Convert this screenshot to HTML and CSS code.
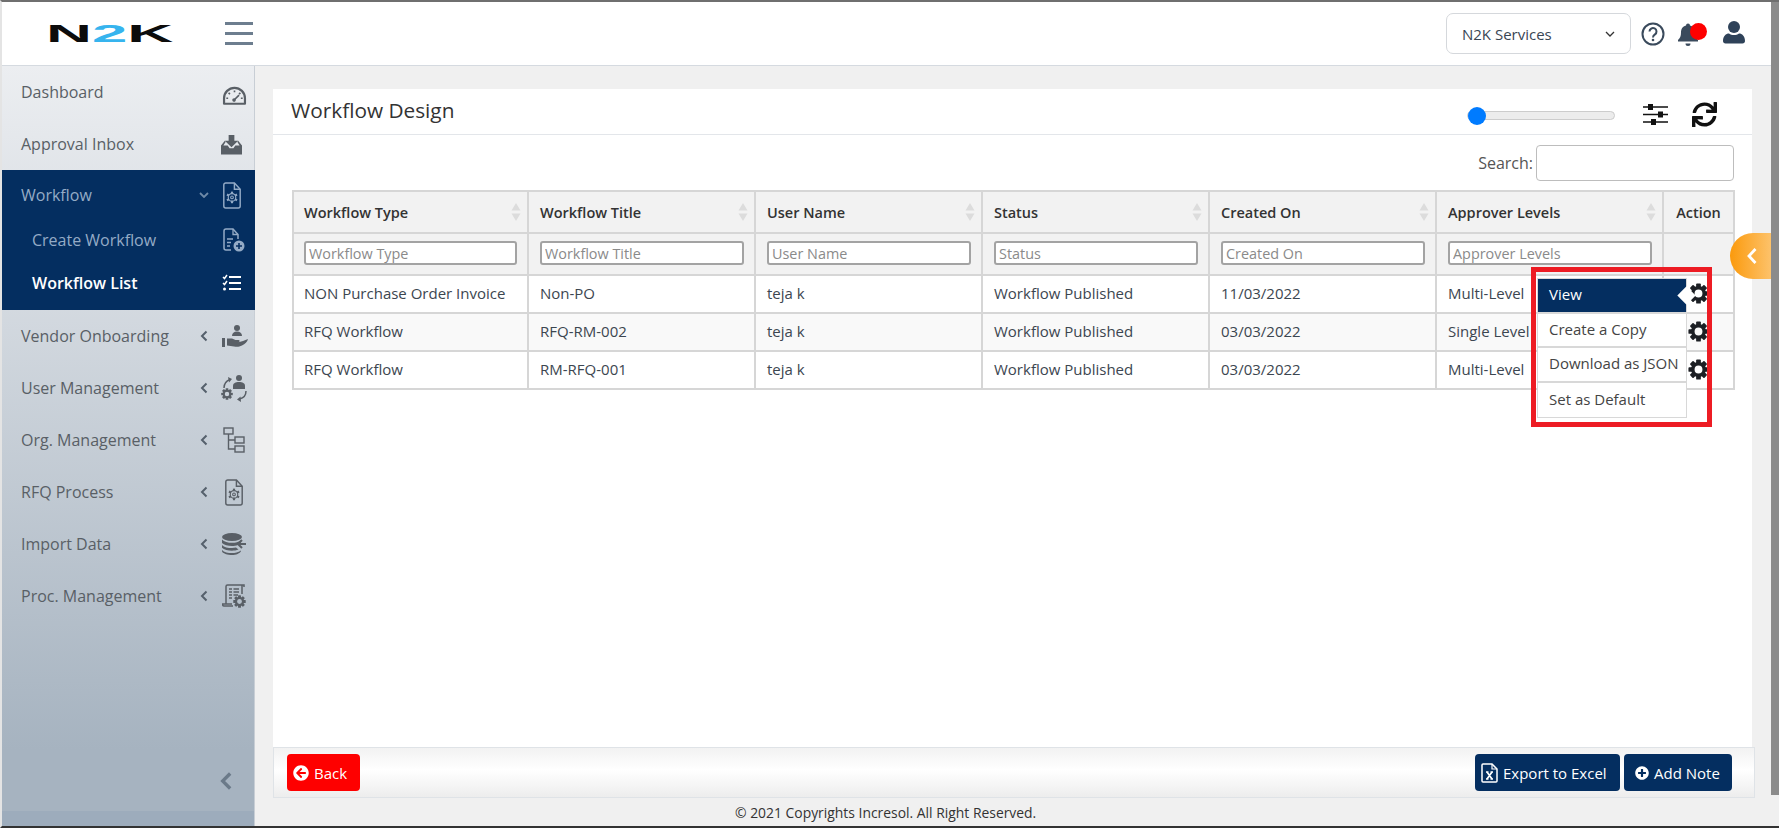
FILE: index.html
```html
<!DOCTYPE html>
<html lang="en">
<head>
  <meta charset="UTF-8">
  <title>Workflow Design</title>
  <link rel="stylesheet" href="styles.css">
</head>
<body>
<svg class="sprite" xmlns="http://www.w3.org/2000/svg">
  <symbol id="gear" viewBox="0 0 24 24">
    <g fill="currentColor">
      <rect x="9.300" y="0.500" width="5.400" height="6" rx="1"/>
      <rect x="9.300" y="0.500" width="5.400" height="6" rx="1" transform="rotate(45 12 12)"/>
      <rect x="9.300" y="0.500" width="5.400" height="6" rx="1" transform="rotate(90 12 12)"/>
      <rect x="9.300" y="0.500" width="5.400" height="6" rx="1" transform="rotate(135 12 12)"/>
      <rect x="9.300" y="0.500" width="5.400" height="6" rx="1" transform="rotate(180 12 12)"/>
      <rect x="9.300" y="0.500" width="5.400" height="6" rx="1" transform="rotate(225 12 12)"/>
      <rect x="9.300" y="0.500" width="5.400" height="6" rx="1" transform="rotate(270 12 12)"/>
      <rect x="9.300" y="0.500" width="5.400" height="6" rx="1" transform="rotate(315 12 12)"/>
    </g>
    <circle cx="12" cy="12" r="6.500" fill="none" stroke="currentColor" stroke-width="4"/>
  </symbol>
  <symbol id="sortArrows" viewBox="0 0 10 18">
    <path d="M5 0l4.500 7.500h-9zM5 18l4.500-7.500h-9z" fill="currentColor"/>
  </symbol>
  <symbol id="chevLeft" viewBox="0 0 10 12">
    <path d="M7.500 1.500L3 6l4.500 4.500" fill="none" stroke="currentColor" stroke-width="2"/>
  </symbol>
  <symbol id="docGear" viewBox="0 0 20 28">
    <path d="M1.500 3a2 2 0 0 1 2-2h9l6 6.500V25a2 2 0 0 1-2 2h-13a2 2 0 0 1-2-2z" fill="none" stroke="currentColor" stroke-width="1.500"/>
    <path d="M12.500 1v6.500h6" fill="none" stroke="currentColor" stroke-width="1.500"/>
    <g fill="currentColor">
      <rect x="8.900" y="10" width="2.200" height="2.400"/>
      <rect x="8.900" y="10" width="2.200" height="2.400" transform="rotate(60 10 16)"/>
      <rect x="8.900" y="10" width="2.200" height="2.400" transform="rotate(120 10 16)"/>
      <rect x="8.900" y="10" width="2.200" height="2.400" transform="rotate(180 10 16)"/>
      <rect x="8.900" y="10" width="2.200" height="2.400" transform="rotate(240 10 16)"/>
      <rect x="8.900" y="10" width="2.200" height="2.400" transform="rotate(300 10 16)"/>
    </g>
    <circle cx="10" cy="16" r="3.900" fill="none" stroke="currentColor" stroke-width="1.200"/>
    <circle cx="10" cy="16" r="1.400" fill="none" stroke="currentColor" stroke-width="1.100"/>
  </symbol>
</svg>

<div class="screen">
  <div class="page">
    <header class="topBar">
      <div class="brand">
        <span class="logo">N<b>2</b>K</span>
        <div class="burger"><i></i><i></i><i></i></div>
      </div>
      <div class="topTools">
        <div class="companySelect">
          <span>N2K Services</span>
          <svg width="10" height="6" viewBox="0 0 10 6"><path d="M1 1l4 4 4-4" fill="none" stroke="#333" stroke-width="1.300"/></svg>
        </div>
        <svg class="toolHelp" width="24" height="24" viewBox="0 0 24 24">
          <circle cx="12" cy="12" r="10.500" fill="none" stroke="#3a4a5c" stroke-width="2"/>
          <path d="M8.500 9.500a3.500 3.500 0 1 1 5.500 2.900c-1.300.9-2 1.500-2 3" fill="none" stroke="#3a4a5c" stroke-width="2"/>
          <circle cx="12" cy="18" r="1.300" fill="#3a4a5c"/>
        </svg>
        <div class="bell">
          <svg width="22" height="24" viewBox="0 0 22 24"><path d="M11 1.500a2 2 0 0 1 2 2c3.500.8 5 3.800 5 7 0 4 1 5.500 3 7.500v1.500H1V18c2-2 3-3.500 3-7.500 0-3.200 1.500-6.200 5-7a2 2 0 0 1 2-2zM8.500 21.500h5a2.500 2.500 0 0 1-5 0z" fill="#3a4a5c"/></svg>
          <span class="bellDot"></span>
        </div>
        <svg class="toolUser" width="22" height="24" viewBox="0 0 22 24"><circle cx="11" cy="7" r="6" fill="#2f4259"/><path d="M0 21c0-5 3-7.500 6-7.500 1.500 1 3 1.500 5 1.500s3.500-.5 5-1.500c3 0 6 2.500 6 7.500 0 1.500-1 2.500-2.500 2.500h-17C1 23.500 0 22.500 0 21z" fill="#2f4259"/></svg>
      </div>
    </header>

    <div class="shell">
      <nav class="sideNav">
        <a class="navItem">
          <span class="navLabel">Dashboard</span>
          <span class="navIcon navIconLow">
            <svg width="25" height="20" viewBox="0 0 26 22">
              <path d="M1.500 19.500v-6a11.500 11.500 0 0 1 23 0v6z" fill="none" stroke="currentColor" stroke-width="2.400" stroke-linejoin="round"/>
              <path d="M13 5v2M6.500 7.500L8 9M19.500 7.500L18 9M4 13.500h2M20 13.500h2M12 16l6-6" fill="none" stroke="currentColor" stroke-width="1.800"/>
              <circle cx="12.500" cy="15.500" r="2" fill="currentColor"/>
            </svg>
          </span>
        </a>
        <a class="navItem">
          <span class="navLabel">Approval Inbox</span>
          <span class="navIcon navIconLeft">
            <svg width="21" height="21" viewBox="0 0 22 22">
              <path d="M8 1h6v6h4l-7 7-7-7h4z" fill="currentColor"/>
              <path d="M4 7L0 12v9.500h22V12l-4-5-1 1 2.500 4H15l-2 3H9l-2-3H2.500L5 8z" fill="currentColor"/>
            </svg>
          </span>
        </a>
        <div class="navGroup">
          <a class="navItem navOpen">
            <span class="navLabel">Workflow</span>
            <svg class="navChevDown" width="10" height="6" viewBox="0 0 10 6"><path d="M1 1l4 4 4-4" fill="none" stroke="currentColor" stroke-width="1.800"/></svg>
            <span class="navIcon navIconLeft"><svg width="20" height="27"><use href="#docGear"/></svg></span>
          </a>
          <a class="navItem navSub">
            <span class="navLabel">Create Workflow</span>
            <span class="navIcon">
              <svg width="22" height="24" viewBox="0 0 22 24">
                <path d="M8 22H3a2 2 0 0 1-2-2V3a2 2 0 0 1 2-2h7l5 5.500V11" fill="none" stroke="currentColor" stroke-width="1.500"/>
                <path d="M10 1v5.500h5M4 11h6M4 14.500h4M4 18h3" fill="none" stroke="currentColor" stroke-width="1.300"/>
                <circle cx="16" cy="18" r="5.500" fill="currentColor"/>
                <path d="M16 15v6M13 18h6" stroke="#042e60" stroke-width="1.600"/>
              </svg>
            </span>
          </a>
          <a class="navItem navSub navCurrent">
            <span class="navLabel">Workflow List</span>
            <span class="navIcon navIconLeft">
              <svg width="19" height="17" viewBox="0 0 19 17">
                <path d="M1 3l1.500 1.500L5 1M1 9l1.500 1.500L5 7" fill="none" stroke="currentColor" stroke-width="1.500"/>
                <circle cx="2.500" cy="15" r="1.500" fill="currentColor"/>
                <path d="M7 3h12M7 9h12M7 15h12" stroke="currentColor" stroke-width="2"/>
              </svg>
            </span>
          </a>
        </div>
        <a class="navItem">
          <span class="navLabel">Vendor Onboarding</span>
          <svg class="navChev" width="10" height="12"><use href="#chevLeft"/></svg>
          <span class="navIcon">
            <svg width="27" height="25" viewBox="0 0 27 25">
              <circle cx="16" cy="4" r="3" fill="currentColor"/>
              <path d="M11 12c0-3 2-4.500 5-4.500s5 1.500 5 4.500z" fill="currentColor"/>
              <path d="M1 14h3v9H1zM6 14.500h5l3.500 1.500h3c1.500 0 1.500 2 0 2.300L22 17l5-2c-.5 3-3 5-6 6.500s-5 1.500-8 1l-7-1z" fill="currentColor"/>
            </svg>
          </span>
        </a>
        <a class="navItem">
          <span class="navLabel">User Management</span>
          <svg class="navChev" width="10" height="12"><use href="#chevLeft"/></svg>
          <span class="navIcon">
            <svg width="27" height="29" viewBox="0 0 27 29">
              <circle cx="18" cy="4" r="3" fill="currentColor"/>
              <path d="M12 15v-3c0-3 2.500-4 6-4s6 1 6 4v3z" fill="currentColor"/>
              <path d="M3 14c0-4 2-7 6-8.500" fill="none" stroke="currentColor" stroke-width="1.500"/>
              <path d="M7 3l4 2-3 3.500z" fill="currentColor"/>
              <path d="M25 17c0 4-2 7-6.500 8" fill="none" stroke="currentColor" stroke-width="1.500"/>
              <path d="M20 28l-4-2.500 3.500-3z" fill="currentColor"/>
              <svg x="0" y="14" width="12" height="12"><use href="#gear"/></svg>
            </svg>
          </span>
        </a>
        <a class="navItem">
          <span class="navLabel">Org. Management</span>
          <svg class="navChev" width="10" height="12"><use href="#chevLeft"/></svg>
          <span class="navIcon">
            <svg width="22" height="26" viewBox="0 0 22 26">
              <g fill="none" stroke="currentColor" stroke-width="1.400">
                <rect x="1" y="1" width="9" height="6"/>
                <rect x="12" y="10" width="9" height="6"/>
                <rect x="12" y="19" width="9" height="6"/>
                <path d="M5.500 7v15H12M5.500 13H12"/>
              </g>
            </svg>
          </span>
        </a>
        <a class="navItem">
          <span class="navLabel">RFQ Process</span>
          <svg class="navChev" width="10" height="12"><use href="#chevLeft"/></svg>
          <span class="navIcon"><svg width="20" height="27"><use href="#docGear"/></svg></span>
        </a>
        <a class="navItem">
          <span class="navLabel">Import Data</span>
          <svg class="navChev" width="10" height="12"><use href="#chevLeft"/></svg>
          <span class="navIcon">
            <svg width="25" height="22" viewBox="0 0 25 22">
              <ellipse cx="10" cy="4" rx="10" ry="4" fill="currentColor"/>
              <path d="M0 6.500C2 9 6 9.800 10 9.800s6-.5 9-2.500v2L16 12c-2 .8-4 1-6 1-4 0-8-1-10-3zM0 12c2 2.500 6 3 10 3 1.500 0 3-.1 4-.4l2.500 2c-2 .8-4.500 1.200-6.500 1.200-4 0-8-1-10-3zM0 17c2 2.500 6 3 10 3 3 0 6-.5 9-2.500V18c-1 2.500-5 4-9 4s-10-1.500-10-4z" fill="currentColor"/>
              <path d="M24 11h-8M20 7l-4 4 4 4" fill="none" stroke="currentColor" stroke-width="2"/>
            </svg>
          </span>
        </a>
        <a class="navItem">
          <span class="navLabel">Proc. Management</span>
          <svg class="navChev" width="10" height="12"><use href="#chevLeft"/></svg>
          <span class="navIcon">
            <svg width="24" height="24" viewBox="0 0 24 24">
              <path d="M4 20V2.500A1.500 1.500 0 0 1 5.500 1H22v2M20 1v9M11 22H2c-1 0-1.500-1-1.500-2H10" fill="none" stroke="currentColor" stroke-width="1.500"/>
              <path d="M7 5h3M11.500 5H17M7 8h3M11.500 8H17M7 11h3M11.500 11H16M7 14h3" stroke="currentColor" stroke-width="1.500"/>
              <svg x="11" y="11" width="13" height="13"><use href="#gear"/></svg>
            </svg>
          </span>
        </a>
        <div class="navCollapse">
          <svg width="18" height="20" viewBox="0 0 10 12"><path d="M7.500 1.500L3 6l4.500 4.500" fill="none" stroke="currentColor" stroke-width="2"/></svg>
        </div>
      </nav>

      <main class="content">
        <section class="card">
          <div class="cardHead">
            <h1>Workflow Design</h1>
            <div class="cardTools">
              <div class="slider"><span class="sliderThumb"></span></div>
              <svg width="25" height="21" viewBox="0 0 25 21">
                <path d="M0 3h25M0 10.500h25M0 18h25" stroke="#111" stroke-width="1.500"/>
                <path d="M5 0h5v6H5zM15 7.500h5v6h-5zM8 15h5v6H8z" fill="#111"/>
              </svg>
              <svg width="25" height="25" viewBox="0 0 512 512"><path fill="#111" d="M440.650 12.570l4 82.770A247.160 247.160 0 0 0 255.830 8C134.730 8 33.910 94.920 12.290 209.820A12 12 0 0 0 24.090 224h49.050a12 12 0 0 0 11.670-9.260 175.910 175.910 0 0 1 317-56.940l-101.460-4.860a12 12 0 0 0-12.570 12v47.410a12 12 0 0 0 12 12H500a12 12 0 0 0 12-12V12a12 12 0 0 0-12-12h-47.370a12 12 0 0 0-11.980 12.570zM255.830 432a175.610 175.610 0 0 1-146-77.800l101.800 4.870a12 12 0 0 0 12.570-12v-47.400a12 12 0 0 0-12-12H12a12 12 0 0 0-12 12V500a12 12 0 0 0 12 12h47.350a12 12 0 0 0 12-12.600l-4.150-82.570A247.170 247.170 0 0 0 255.830 504c121.110 0 221.930-86.920 243.550-201.820a12 12 0 0 0-11.800-14.180h-49.050a12 12 0 0 0-11.670 9.260A175.860 175.860 0 0 1 255.830 432z"/></svg>
            </div>
          </div>
          <div class="cardBody">
            <div class="searchRow">
              <label>Search:</label>
              <div class="searchBox"></div>
            </div>
            <div class="tableWrap">
              <table class="dataTable">
                <colgroup>
                  <col class="colWide"><col class="colStd"><col class="colStd"><col class="colStd"><col class="colStd"><col class="colStd"><col class="colAction">
                </colgroup>
                <thead>
                  <tr class="headRow">
                    <th><div class="thInner">Workflow Type<svg width="10" height="18"><use href="#sortArrows"/></svg></div></th>
                    <th><div class="thInner">Workflow Title<svg width="10" height="18"><use href="#sortArrows"/></svg></div></th>
                    <th><div class="thInner">User Name<svg width="10" height="18"><use href="#sortArrows"/></svg></div></th>
                    <th><div class="thInner">Status<svg width="10" height="18"><use href="#sortArrows"/></svg></div></th>
                    <th><div class="thInner">Created On<svg width="10" height="18"><use href="#sortArrows"/></svg></div></th>
                    <th><div class="thInner">Approver Levels<svg width="10" height="18"><use href="#sortArrows"/></svg></div></th>
                    <th class="thAction">Action</th>
                  </tr>
                  <tr class="filterRow">
                    <th><input placeholder="Workflow Type"></th>
                    <th><input placeholder="Workflow Title"></th>
                    <th><input placeholder="User Name"></th>
                    <th><input placeholder="Status"></th>
                    <th><input placeholder="Created On"></th>
                    <th><input placeholder="Approver Levels"></th>
                    <th></th>
                  </tr>
                </thead>
                <tbody>
                  <tr>
                    <td>NON Purchase Order Invoice</td><td>Non-PO</td><td>teja k</td><td>Workflow Published</td><td>11/03/2022</td><td>Multi-Level</td>
                    <td class="tdAction"><svg class="gear" width="21" height="21"><use href="#gear"/></svg></td>
                  </tr>
                  <tr>
                    <td>RFQ Workflow</td><td>RFQ-RM-002</td><td>teja k</td><td>Workflow Published</td><td>03/03/2022</td><td>Single Level</td>
                    <td class="tdAction"><svg class="gear" width="21" height="21"><use href="#gear"/></svg></td>
                  </tr>
                  <tr>
                    <td>RFQ Workflow</td><td>RM-RFQ-001</td><td>teja k</td><td>Workflow Published</td><td>03/03/2022</td><td>Multi-Level</td>
                    <td class="tdAction"><svg class="gear" width="21" height="21"><use href="#gear"/></svg></td>
                  </tr>
                </tbody>
              </table>
              <ul class="actionMenu">
                <li class="actionActive">View</li>
                <li>Create a Copy</li>
                <li>Download as JSON</li>
                <li>Set as Default</li>
              </ul>
              <div class="callout"></div>
            </div>
          </div>
        </section>
        <div class="actionBar">
          <button class="btn btnBack">
            <svg width="16" height="16" viewBox="0 0 512 512"><path fill="currentColor" d="M256 504C119 504 8 393 8 256S119 8 256 8s248 111 248 248-111 248-248 248zm28.900-143.600L209.400 288H392c13.300 0 24-10.700 24-24v-16c0-13.300-10.700-24-24-24H209.400l75.500-72.400c9.700-9.300 9.900-24.800.4-34.300l-11-10.900c-9.400-9.400-24.600-9.400-33.900 0L107.700 239c-9.400 9.400-9.400 24.600 0 33.900l132.700 132.700c9.400 9.400 24.600 9.400 33.900 0l11-10.900c9.500-9.500 9.300-25-.4-34.300z"/></svg>
            Back
          </button>
          <div class="actionRight">
            <button class="btn btnNavy btnExport">
              <svg width="17" height="20" viewBox="0 0 17 20">
                <path d="M1 2a1 1 0 0 1 1-1h9l5 5v12a1 1 0 0 1-1 1H2a1 1 0 0 1-1-1z" fill="none" stroke="currentColor" stroke-width="1.500"/>
                <path d="M11 1v5h5" fill="none" stroke="currentColor" stroke-width="1.200"/>
                <path d="M5 9h2.500M9.500 9H12M5 16h2.500M9.500 16H12M6 9l5 7M11 9l-5 7" fill="none" stroke="currentColor" stroke-width="1.700"/>
              </svg>
              Export to Excel
            </button>
            <button class="btn btnNavy btnNote">
              <svg width="14" height="14" viewBox="0 0 512 512"><path fill="currentColor" d="M256 8C119 8 8 119 8 256s111 248 248 248 248-111 248-248S393 8 256 8zm144 276c0 6.600-5.400 12-12 12h-92v92c0 6.600-5.400 12-12 12h-56c-6.600 0-12-5.400-12-12v-92h-92c-6.600 0-12-5.400-12-12v-56c0-6.600 5.400-12 12-12h92v-92c0-6.600 5.400-12 12-12h56c6.600 0 12 5.400 12 12v92h92c6.600 0 12 5.400 12 12v56z"/></svg>
              Add Note
            </button>
          </div>
        </div>
        <footer class="copyright">© 2021 Copyrights Incresol. All Right Reserved.</footer>
        <div class="sideTab">
          <svg width="12" height="18" viewBox="0 0 12 18"><path d="M9.500 2L3 9l6.500 7" fill="none" stroke="#fff" stroke-width="2.800"/></svg>
        </div>
      </main>
    </div>
  </div>
  <div class="scrollTrack"><div class="scrollThumb"></div></div>
</div>
</body>
</html>
```

FILE: styles.css
```css
:root {
  --navy: #042e60;
  --line: #d6d6d6;
}
* {
  box-sizing: border-box;
}
html, body {
  height: 100%;
}
body {
  margin: 0;
  overflow: hidden;
  background: #fff;
  color: #333;
  font-family: "Open Sans", "Liberation Sans", sans-serif;
  font-size: 15px;
}
.sprite {
  display: none;
}
.screen {
  display: flex;
  height: 828px;
  border-top: 2px solid #6f6f6f;
  border-bottom: 2px solid #333;
  border-left: 2px solid #e4e4e4;
}
.page {
  flex: 1;
  display: flex;
  flex-direction: column;
  min-width: 0;
}
.scrollTrack {
  width: 8px;
  background: #f0f0f0;
}
.scrollThumb {
  height: 793px;
  background: #8b8b8b;
}

/* top bar */
.topBar {
  height: 64px;
  display: flex;
  justify-content: space-between;
  align-items: center;
  background: #fff;
  border-bottom: 1px solid #d5dae0;
}
.brand {
  display: flex;
  align-items: center;
  padding-left: 44px;
}
.logo {
  display: inline-block;
  width: 48px;
  margin-right: 131px;
  font-family: "Liberation Sans", sans-serif;
  font-size: 24px;
  font-weight: 700;
  line-height: 1;
  color: #0c0c0c;
  transform: scaleX(2.65);
  transform-origin: left center;
  white-space: nowrap;
}
.logo b {
  color: #36b4ee;
}
.burger {
  display: flex;
  flex-direction: column;
  gap: 7px;
  width: 28px;
}
.burger i {
  display: block;
  height: 3px;
  background: #6d7e8f;
}
.topTools {
  display: flex;
  align-items: center;
  padding-right: 26px;
}
.companySelect {
  width: 185px;
  height: 41px;
  display: flex;
  justify-content: space-between;
  align-items: center;
  padding: 0 15px;
  border: 1px solid #d5d8dc;
  border-radius: 7px;
  color: #3a4654;
  font-size: 15px;
}
.toolHelp {
  margin-left: 10px;
}
.bell {
  position: relative;
  margin-left: 12px;
  width: 22px;
  height: 24px;
}
.bellDot {
  position: absolute;
  top: 1px;
  left: 13px;
  width: 17px;
  height: 17px;
  border-radius: 50%;
  background: #fe0000;
}
.toolUser {
  margin-left: 24px;
  margin-top: -4px;
}

/* side nav */
.shell {
  flex: 1;
  display: flex;
  min-height: 0;
}
.sideNav {
  width: 253px;
  flex: none;
  display: flex;
  flex-direction: column;
  background: linear-gradient(#eceef1 0, #a6b3c0 90%, #a6b3c0 98%, #9dacbc 98%);
  border-right: 1px solid #c8ced5;
  color: #555;
}
.navItem {
  display: flex;
  align-items: center;
  height: 52px;
  padding: 0 5px 0 19px;
  font-size: 16px;
  color: #595f66;
}
.navLabel {
  flex: 1;
}
.navIcon {
  flex: none;
  width: 30px;
  margin-left: 10px;
  display: flex;
  justify-content: center;
  align-items: center;
}
.navIconLow {
  margin-top: 7px;
}
.navIconLeft {
  padding-right: 5px;
}
.navChev {
  flex: none;
  color: #55606c;
}
.navGroup {
  position: relative;
  height: 140px;
  margin-right: -2px;
  padding-right: 2px;
  background: var(--navy);
}
.navGroup .navItem {
  color: #94abc6;
}
.navOpen {
  height: 48px;
  padding-top: 2px;
}
.navSub {
  height: 43px;
  padding-left: 30px;
}
.navGroup .navCurrent {
  color: #fff;
  font-weight: 600;
}
.navChevDown {
  color: #6f8aa8;
}
.navCollapse {
  margin-top: auto;
  padding: 0 19px 31px 0;
  text-align: right;
  color: #6b7a89;
}

/* main card */
.content {
  position: relative;
  flex: 1;
  min-width: 0;
  display: flex;
  flex-direction: column;
  padding: 23px 19px 0 18px;
  background: #f0f0f0;
}
.card {
  flex: 1;
  display: flex;
  flex-direction: column;
  min-height: 0;
  background: #fff;
}
.cardHead {
  height: 46px;
  display: flex;
  justify-content: space-between;
  align-items: center;
  padding: 0 35px 0 18px;
  border-bottom: 1px solid #e3e6ea;
}
.cardHead h1 {
  margin: 0 0 4px;
  font-size: 20.8px;
  font-weight: 400;
  color: #333;
}
.cardTools {
  display: flex;
  align-items: center;
  gap: 24px;
  margin-top: 5px;
}
.slider {
  position: relative;
  width: 148px;
  height: 9px;
  margin: 3px 4px 0 0;
  border: 1px solid #ccc;
  border-radius: 5px;
  background: #ececec;
}
.sliderThumb {
  position: absolute;
  top: -5px;
  left: 0;
  width: 18px;
  height: 18px;
  border-radius: 50%;
  background: #007bff;
}
.cardBody {
  flex: 1;
  padding: 10px 18px 0 19px;
}
.searchRow {
  display: flex;
  justify-content: flex-end;
  align-items: center;
  gap: 3px;
  height: 36px;
  margin-bottom: 9px;
  font-size: 16px;
}
.searchRow label {
  color: #555;
}
.searchBox {
  width: 198px;
  height: 36px;
  border: 1px solid #bdbdbd;
  border-radius: 4px;
  background: #fff;
}

/* table */
.tableWrap {
  position: relative;
}
.dataTable {
  width: 1442px;
  table-layout: fixed;
  border-collapse: collapse;
  border: 2px solid var(--line);
}
.colWide {
  width: 235px;
}
.colStd {
  width: 227px;
}
.colAction {
  width: 71px;
}
.dataTable th,
.dataTable td {
  padding: 0 10px 0 11px;
  border: 2px solid var(--line);
  text-align: left;
}
.dataTable tr > :first-child {
  padding-left: 10px;
}
.dataTable th {
  background: #f2f2f2;
  font-size: 14.5px;
  font-weight: 600;
  color: #333;
}
.headRow th {
  height: 42px;
}
.thInner {
  display: flex;
  justify-content: space-between;
  align-items: center;
}
.thInner svg {
  color: #dcdcdc;
  margin-right: -4px;
}
.dataTable .thAction {
  text-align: center;
  padding: 0;
}
.dataTable .filterRow th {
  height: 42px;
  padding-bottom: 2px;
}
.filterRow input {
  display: block;
  width: 100%;
  height: 24px;
  padding: 0 3px;
  border: 2px solid #a3a3a3;
  border-radius: 3px;
  background: #fff;
  font: 400 14.4px "Open Sans", sans-serif;
}
.filterRow input::placeholder {
  color: #8a8a8a;
  opacity: 1;
}
.dataTable td {
  height: 38px;
  padding-bottom: 2px;
  color: #3c4650;
  white-space: nowrap;
}
.dataTable tbody tr:nth-child(even) td {
  background: #f9f9f9;
}
.dataTable .tdAction {
  padding: 0 0 2px;
  text-align: center;
}
.gear {
  display: block;
  margin: 0 auto;
  color: #1c1f24;
}

/* row action menu, drawn over the table */
.actionMenu {
  position: absolute;
  top: 88px;
  left: 1245px;
  width: 150px;
  margin: 0;
  padding: 0;
  list-style: none;
  background: #fff;
  border: 1px solid #d8d8d8;
  font-size: 15px;
}
.actionMenu li {
  height: 34.500px;
  padding: 0 11px;
  line-height: 31px;
  border-bottom: 2px solid #d8d8d8;
  color: #444;
  white-space: nowrap;
}
.actionMenu li:last-child {
  border-bottom: 0;
  line-height: 33px;
}
.actionMenu .actionActive {
  position: relative;
  background: var(--navy);
  color: #fff;
  line-height: 31px;
}
.actionActive::after {
  content: "";
  position: absolute;
  top: 10px;
  right: -7px;
  width: 13px;
  height: 13px;
  background: #fff;
  transform: rotate(45deg);
}
.callout {
  position: absolute;
  top: 77px;
  left: 1239px;
  width: 181px;
  height: 160px;
  border: 5px solid #ed1c24;
}

/* bottom action bar */
.actionBar {
  height: 51px;
  margin-right: -3px;
  display: flex;
  justify-content: space-between;
  align-items: center;
  padding: 0 22px 0 13px;
  border: 1px solid #dfe3e7;
  background: linear-gradient(#f2f2f2, #fff 45%, #ededed);
}
.actionRight {
  display: flex;
  gap: 4px;
}
.btn {
  display: flex;
  align-items: center;
  gap: 5px;
  height: 37px;
  padding-bottom: 1px;
  border: 0;
  border-radius: 4px;
  color: #fff;
  font: 400 15px "Open Sans", sans-serif;
}
.btnBack {
  width: 73px;
  padding-left: 6px;
  padding-right: 0;
  background: #fe0000;
}
.btnNavy {
  background: var(--navy);
}
.btnExport {
  width: 145px;
  padding-left: 6px;
  padding-right: 0;
}
.btnNote {
  width: 108px;
  padding-left: 11px;
  padding-right: 0;
}
.copyright {
  height: 28px;
  padding-left: 462px;
  line-height: 30px;
  font-size: 13.900px;
  color: #333;
}
.sideTab {
  position: absolute;
  top: 167px;
  right: 0;
  width: 41px;
  height: 46px;
  display: flex;
  align-items: center;
  padding-left: 16px;
  border-radius: 23px 0 0 23px;
  background: linear-gradient(90deg, #fb9a0d, #fdc26a);
}
```
